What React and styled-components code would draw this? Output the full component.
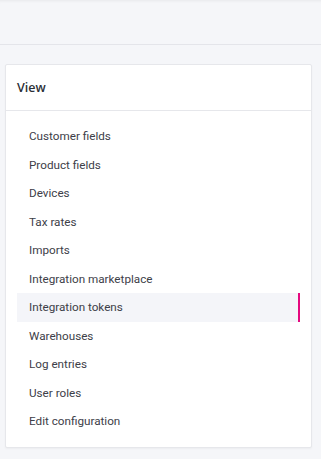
import React from 'react';
import styled, { createGlobalStyle } from 'styled-components';

const GlobalStyle = createGlobalStyle`
    html, body {
        margin: 0;
        padding: 0;
        background: #f5f6f9;
    }
    * {
        box-sizing: border-box;
    }
`;

const Page = styled.div`
    width: 321px;
    height: 459px;
    background: #f5f6f9;
    overflow: hidden;
`;

const TopBar = styled.div`
    height: 45px;
    border-bottom: 1px solid #e4e5ea;
    box-shadow: inset 0 3px 3px -2px rgba(0, 0, 0, 0.06);
`;

const Content = styled.div`
    padding: 19px 9px 0 5px;
`;

const Card = styled.div`
    background: #fff;
    border: 1px solid #e6e7eb;
    border-radius: 2px;
    box-shadow: 0 1px 2px rgba(0, 0, 0, 0.04);
`;

const CardHeader = styled.div`
    height: 46px;
    display: flex;
    align-items: center;
    padding: 0 11px 1px;
    border-bottom: 1px solid #e6e7eb;
    font-family: 'Open Sans', Lato, sans-serif;
    font-weight: 600;
    font-size: 12.5px;
    color: #2b2f36;
`;

const List = styled.ul`
    list-style: none;
    margin: 0;
    padding: 11px 11px 11px 11px;
`;

const Item = styled.li`
    position: relative;
    height: 28.5px;
    display: flex;
    align-items: center;
    padding-left: 12px;
    font-family: Roboto, 'Liberation Sans', sans-serif;
    font-size: 11.7px;
    color: #3d4048;
    background: ${(p) => (p.$active ? '#f4f5f9' : 'transparent')};
    cursor: pointer;

    &::after {
        content: '';
        display: ${(p) => (p.$active ? 'block' : 'none')};
        position: absolute;
        right: 0;
        top: 0;
        bottom: 0;
        width: 2px;
        background: #e5097f;
    }
`;

const items = [
    'Customer fields',
    'Product fields',
    'Devices',
    'Tax rates',
    'Imports',
    'Integration marketplace',
    'Integration tokens',
    'Warehouses',
    'Log entries',
    'User roles',
    'Edit configuration',
];

const App = () => {
    return (
        <Page>
            <GlobalStyle />
            <TopBar />
            <Content>
                <Card>
                    <CardHeader>View</CardHeader>
                    <List>
                        {items.map((name) => (
                            <Item key={name} $active={name === 'Integration tokens'}>
                                {name}
                            </Item>
                        ))}
                    </List>
                </Card>
            </Content>
        </Page>
    );
};

export default App;
